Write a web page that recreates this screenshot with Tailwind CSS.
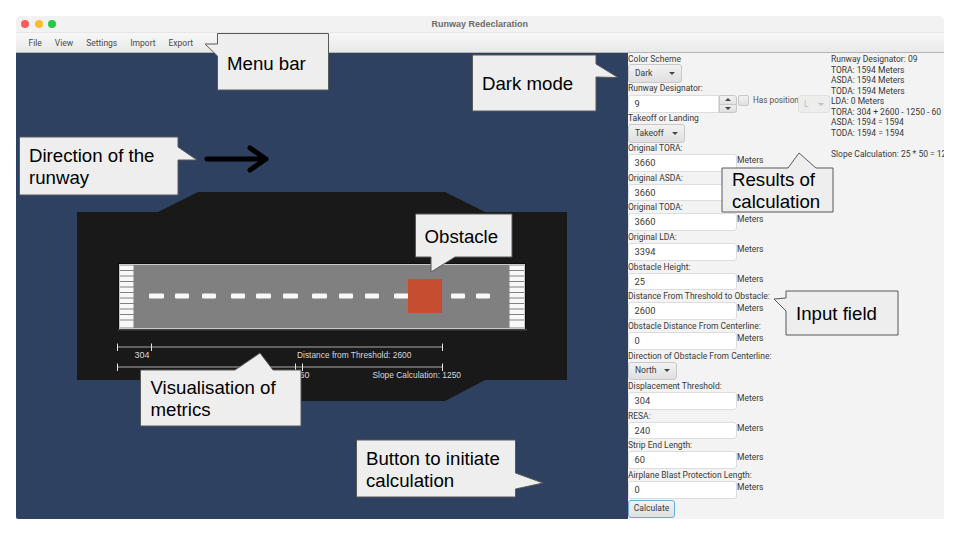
<!DOCTYPE html>
<html lang="en">
<head>
  <meta charset="UTF-8">
  <meta name="viewport" content="width=device-width, initial-scale=1.0">
  <title>Runway Redeclaration</title>
  <script src="https://cdn.jsdelivr.net/npm/@tailwindcss/browser@4"></script>
</head>
<body class="bg-white">
  <div class="relative w-[960px] h-[540px] pl-[16px] pt-[16px] overflow-hidden font-['Roboto','Liberation_Sans',sans-serif]">

    <!-- app window -->
    <div class="w-[927.5px] h-[503px] flex flex-col rounded-t-[5px] rounded-b-[2px] overflow-hidden">
      <div class="relative h-[17px] bg-[#f2f2f2] flex items-center justify-center pt-[1px] border-b border-[#e6e6e6]">
        <div class="absolute left-[5px] top-[4px] flex gap-[5.5px]">
          <span class="w-[8px] h-[8px] rounded-full bg-[#fc5b57]"></span>
          <span class="w-[8px] h-[8px] rounded-full bg-[#fdbb2e]"></span>
          <span class="w-[8px] h-[8px] rounded-full bg-[#28c840]"></span>
        </div>
        <span class="text-[9px] font-bold text-[#6b6b6b] font-['Liberation_Sans',sans-serif]">Runway Redeclaration</span>
      </div>
      <div class="h-[20px] flex items-center pl-[12.5px] pt-[2px] gap-[13px] text-[8.5px] text-[#4a4a4a] bg-gradient-to-b from-[#f7f7f7] to-[#e9e9e9] border-b border-[#b4b4b4]">
        <span>File</span><span>View</span><span>Settings</span><span>Import</span><span>Export</span>
      </div>

      <div class="flex-1 flex min-h-0">
        <!-- canvas -->
        <div class="w-[612px] bg-[#2e4161] shrink-0">
          <svg class="block font-['Liberation_Sans',sans-serif]" width="612" height="466" viewBox="16 53 612 466">
            <path d="M207 159H266M250 148L266 159L250 170" fill="none" stroke="#000" stroke-width="5" stroke-linecap="round" stroke-linejoin="round"/>
            <polygon points="77,212 158,212 198,192 445,192 485,212 567,212 567,380 485,380 445,401 198,401 158,380 77,380" fill="#191919"/>

            <rect x="118" y="263" width="408" height="66" fill="#0d0d0d"/>
            <rect x="118" y="329" width="409" height="1.500" fill="#444444"/>
            <rect x="119.500" y="264.500" width="405" height="64" fill="#808080" stroke="#c9c9c9"/>
            <g fill="#f8f8f8">
              <rect x="120" y="265.500" width="13.500" height="4.500"/><rect x="120" y="271" width="13.500" height="4.500"/>
              <rect x="120" y="276.500" width="13.500" height="4.500"/><rect x="120" y="282" width="13.500" height="4.500"/>
              <rect x="120" y="287.500" width="13.500" height="4.500"/><rect x="120" y="293" width="13.500" height="4.500"/>
              <rect x="120" y="298.500" width="13.500" height="4.500"/><rect x="120" y="304" width="13.500" height="4.500"/>
              <rect x="120" y="309.500" width="13.500" height="4.500"/><rect x="120" y="315" width="13.500" height="4.500"/>
              <rect x="120" y="320.500" width="13.500" height="7"/>
              <rect x="509.500" y="265.500" width="14.500" height="4.500"/><rect x="509.500" y="271" width="14.500" height="4.500"/>
              <rect x="509.500" y="276.500" width="14.500" height="4.500"/><rect x="509.500" y="282" width="14.500" height="4.500"/>
              <rect x="509.500" y="287.500" width="14.500" height="4.500"/><rect x="509.500" y="293" width="14.500" height="4.500"/>
              <rect x="509.500" y="298.500" width="14.500" height="4.500"/><rect x="509.500" y="304" width="14.500" height="4.500"/>
              <rect x="509.500" y="309.500" width="14.500" height="4.500"/><rect x="509.500" y="315" width="14.500" height="4.500"/>
              <rect x="509.500" y="320.500" width="14.500" height="7"/>
              <rect x="149" y="293.500" width="15" height="5" rx="1"/><rect x="175" y="293.500" width="14" height="5" rx="1"/>
              <rect x="202" y="293.500" width="14" height="5" rx="1"/><rect x="231" y="293.500" width="14" height="5" rx="1"/>
              <rect x="256" y="293.500" width="15" height="5" rx="1"/><rect x="283" y="293.500" width="15" height="5" rx="1"/>
              <rect x="312" y="293.500" width="15" height="5" rx="1"/><rect x="339" y="293.500" width="14" height="5" rx="1"/>
              <rect x="365" y="293.500" width="14" height="5" rx="1"/><rect x="394" y="293.500" width="15" height="5" rx="1"/>
              <rect x="451" y="293.500" width="14" height="5" rx="1"/><rect x="476" y="293.500" width="14" height="5" rx="1"/>
            </g>
            <rect x="408" y="279" width="34" height="34" fill="#c64d2f"/>

            <g stroke="#7a7a7a" stroke-width="1.500">
              <path d="M117.500 347H442M117.500 367H442"/>
            </g>
            <g stroke="#e6e6e6" stroke-width="1">
              <path d="M117.500 343.500V351M151.500 343.500V351M442.500 343.500V351M117.500 363.500V371M295.500 363.500V371M302.500 363.500V371M442.500 363.500V371"/>
            </g>
            <g fill="#d8d8d8" font-size="8.400">
              <text x="134.500" y="358" font-size="9">304</text>
              <text x="297" y="358">Distance from Threshold: 2600</text>
              <text x="299.500" y="378" font-size="9">60</text>
              <text x="372.500" y="378">Slope Calculation: 1250</text>
            </g>
          </svg>
        </div>

        <!-- form panel -->
        <div class="flex-1 min-w-0 bg-[#f3f3f3] flex overflow-hidden text-[8.5px] text-[#3a3a3a]">
          <div class="w-[203px] shrink-0 flex flex-col">
            <label class="h-[11px] leading-[12px]">Color Scheme</label>
            <div class="h-[19px] w-[54px] flex items-center justify-between px-[6px] rounded-[3px] border border-[#c8c8c8] bg-gradient-to-b from-[#f2f2f2] to-[#dfdfdf] mb-[1px]"><span>Dark</span><span class="w-0 h-0 border-x-[3px] border-x-transparent border-t-[3px] border-t-[#444444]"></span></div>
            <label class="h-[11px] leading-[9px]">Runway Designator:</label>
            <div class="flex items-start h-[18px]">
              <div class="w-[91px] h-[18px] bg-white border border-[#dddddd] rounded-l-[3px] pl-[5.500px] leading-[16px] text-[9.3px]">9</div>
              <div class="w-[18px] h-[18px] flex flex-col">
                <div class="flex-1 flex items-center justify-center bg-gradient-to-b from-[#f2f2f2] to-[#e2e2e2] border border-[#c8c8c8] rounded-tr-[3px]"><span class="w-0 h-0 border-x-[3.5px] border-x-transparent border-b-[3px] border-b-[#444444]"></span></div>
                <div class="flex-1 flex items-center justify-center bg-gradient-to-b from-[#ececec] to-[#dfdfdf] border border-t-0 border-[#c8c8c8] rounded-br-[3px]"><span class="w-0 h-0 border-x-[3.5px] border-x-transparent border-t-[3px] border-t-[#444444]"></span></div>
              </div>
              <div class="w-[11px] h-[11px] ml-[1px] rounded-[2px] border border-[#c8c8c8] bg-gradient-to-b from-[#f2f2f2] to-[#e0e0e0]"></div>
              <span class="ml-[4px] w-[45px] whitespace-nowrap leading-[11px] text-[8.2px] text-[#555555]">Has position</span>
              <div class="w-[32px] h-[18px] flex items-center justify-between px-[5px] rounded-[3px] border border-[#e0e0e0] bg-[#ededed] text-[#bdbdbd]"><span>L</span><span class="w-0 h-0 border-x-[3px] border-x-transparent border-t-[3px] border-t-[#c0c0c0]"></span></div>
            </div>
            <label class="h-[11px] leading-[10px]">Takeoff or Landing</label>
            <div class="h-[19px] w-[57px] flex items-center justify-between px-[6px] rounded-[3px] border border-[#c8c8c8] bg-gradient-to-b from-[#f2f2f2] to-[#dfdfdf]"><span>Takeoff</span><span class="w-0 h-0 border-x-[3px] border-x-transparent border-t-[3px] border-t-[#444444]"></span></div>

            <label class="h-[11px] leading-[11px]">Original TORA:</label>
            <div class="flex h-[17.700px]"><div class="w-[109px] bg-white border border-[#dddddd] rounded-[3px] pl-[5.500px] leading-[16px] text-[9.3px]">3660</div><span class="leading-[10px] mt-[1px]">Meters</span></div>
            <label class="h-[12px] leading-[13.500px]">Original ASDA:</label>
            <div class="flex h-[17.700px]"><div class="w-[109px] bg-white border border-[#dddddd] rounded-[3px] pl-[5.500px] leading-[16px] text-[9.3px]">3660</div><span class="leading-[10px] mt-[1px]">Meters</span></div>
            <label class="h-[12px] leading-[13.500px]">Original TODA:</label>
            <div class="flex h-[17.700px]"><div class="w-[109px] bg-white border border-[#dddddd] rounded-[3px] pl-[5.500px] leading-[16px] text-[9.3px]">3660</div><span class="leading-[10px] mt-[1px]">Meters</span></div>
            <label class="h-[12px] leading-[13.500px]">Original LDA:</label>
            <div class="flex h-[17.700px]"><div class="w-[109px] bg-white border border-[#dddddd] rounded-[3px] pl-[5.500px] leading-[16px] text-[9.3px]">3394</div><span class="leading-[10px] mt-[1px]">Meters</span></div>
            <label class="h-[12px] leading-[13.500px]">Obstacle Height:</label>
            <div class="flex h-[17.700px]"><div class="w-[109px] bg-white border border-[#dddddd] rounded-[3px] pl-[5.500px] leading-[16px] text-[9.3px]">25</div><span class="leading-[10px] mt-[1px]">Meters</span></div>
            <label class="h-[12px] leading-[13.500px] whitespace-nowrap">Distance From Threshold to Obstacle:</label>
            <div class="flex h-[17.700px]"><div class="w-[109px] bg-white border border-[#dddddd] rounded-[3px] pl-[5.500px] leading-[16px] text-[9.3px]">2600</div><span class="leading-[10px] mt-[1px]">Meters</span></div>
            <label class="h-[12px] leading-[13.500px] whitespace-nowrap">Obstacle Distance From Centerline:</label>
            <div class="flex h-[17.700px]"><div class="w-[109px] bg-white border border-[#dddddd] rounded-[3px] pl-[5.500px] leading-[16px] text-[9.3px]">0</div><span class="leading-[10px] mt-[1px]">Meters</span></div>
            <label class="h-[12px] leading-[13.500px] whitespace-nowrap">Direction of Obstacle From Centerline:</label>
            <div class="h-[18px] w-[49px] flex items-center justify-between px-[6px] rounded-[3px] border border-[#c8c8c8] bg-gradient-to-b from-[#f2f2f2] to-[#dfdfdf]"><span>North</span><span class="w-0 h-0 border-x-[3px] border-x-transparent border-t-[3px] border-t-[#444444]"></span></div>
            <label class="h-[12px] leading-[13.500px]">Displacement Threshold:</label>
            <div class="flex h-[17.700px]"><div class="w-[109px] bg-white border border-[#dddddd] rounded-[3px] pl-[5.500px] leading-[16px] text-[9.3px]">304</div><span class="leading-[10px] mt-[1px]">Meters</span></div>
            <label class="h-[12px] leading-[13.500px]">RESA:</label>
            <div class="flex h-[17.700px]"><div class="w-[109px] bg-white border border-[#dddddd] rounded-[3px] pl-[5.500px] leading-[16px] text-[9.3px]">240</div><span class="leading-[10px] mt-[1px]">Meters</span></div>
            <label class="h-[12px] leading-[13.500px]">Strip End Length:</label>
            <div class="flex h-[17.700px]"><div class="w-[109px] bg-white border border-[#dddddd] rounded-[3px] pl-[5.500px] leading-[16px] text-[9.3px]">60</div><span class="leading-[10px] mt-[1px]">Meters</span></div>
            <label class="h-[12px] leading-[13.500px] whitespace-nowrap">Airplane Blast Protection Length:</label>
            <div class="flex h-[17.700px]"><div class="w-[109px] bg-white border border-[#dddddd] rounded-[3px] pl-[5.500px] leading-[16px] text-[9.3px]">0</div><span class="leading-[10px] mt-[1px]">Meters</span></div>
            <button class="mt-[1px] h-[18px] w-[47px] rounded-[3px] border border-[#5fb2dc] bg-gradient-to-b from-[#f2f2f2] to-[#dfdfdf] text-[8.5px] text-[#3a3a3a]">Calculate</button>
          </div>

          <div class="flex-1 min-w-0 whitespace-nowrap leading-[10.500px] pt-[1px]">
            <div>Runway Designator: 09</div>
            <div>TORA: 1594 Meters</div>
            <div>ASDA: 1594 Meters</div>
            <div>TODA: 1594 Meters</div>
            <div>LDA: 0 Meters</div>
            <div>TORA: 304 + 2600 - 1250 - 60</div>
            <div>ASDA: 1594 = 1594</div>
            <div>TODA: 1594 = 1594</div>
            <div class="h-[10.500px]"></div>
            <div>Slope Calculation: 25 * 50 = 1250</div>
          </div>
        </div>
      </div>
    </div>

    <!-- slide callouts drawn on top of the screenshot -->
    <svg class="absolute left-0 top-0 font-['Liberation_Sans',sans-serif]" width="960" height="540" viewBox="0 0 960 540">
      <g fill="#eeeeee" stroke="#595959" stroke-width="1">
        <polygon points="217.500,33.500 328.500,33.500 328.500,90 217.500,90 217.500,56 205,44 217.500,44"/>
        <polygon points="472.500,55 596,55 596,64 618,77.500 596,77 596,111 472.500,111"/>
        <polygon points="19.500,137 178,137 178,147 197,160 178,160 178,195 19.500,195"/>
        <polygon points="356.500,440 515.500,440 515.500,473 543,483 515.500,489 515.500,497 356.500,497"/>
        <polygon points="140.500,370 235,370 260,353 273,370 301,370 301,426 140.500,426"/>
        <polygon points="415.500,214 512,214 512,257 455,257 431,272 431,257 415.500,257"/>
        <polygon points="722,168 788,168 799,153 816,168 833,168 833,212 722,212"/>
        <polygon points="786,291 898,291 898,335 786,335 786,311 774,299 786,298"/>
      </g>
      <g fill="#000000" font-size="18.670">
        <text x="227" y="70">Menu bar</text>
        <text x="482" y="89.500">Dark mode</text>
        <text x="29" y="162">Direction of the</text>
        <text x="29" y="184">runway</text>
        <text x="366" y="464.500">Button to initiate</text>
        <text x="366" y="487">calculation</text>
        <text x="150.500" y="394">Visualisation of</text>
        <text x="150.500" y="416">metrics</text>
        <text x="424.500" y="243">Obstacle</text>
        <text x="732" y="185.500">Results of</text>
        <text x="732" y="208">calculation</text>
        <text x="796" y="320">Input field</text>
      </g>
    </svg>
  </div>
</body>
</html>
